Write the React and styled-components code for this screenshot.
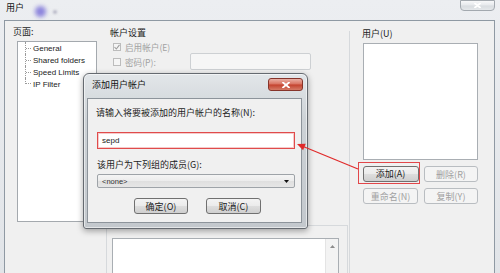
import React from 'react'
import styled, { createGlobalStyle } from 'styled-components'

const cjk = `"Noto Sans CJK SC", "Liberation Sans", sans-serif`
const latin = `"Liberation Sans", "Noto Sans CJK SC", sans-serif`

const GlobalStyle = createGlobalStyle`
  html, body {
    margin: 0;
    padding: 0;
    background: #ffffff;
  }
`

const Screen = styled.div`
  position: relative;
  width: 500px;
  height: 273px;
  overflow: hidden;
  display: flex;
  flex-direction: column;
  background: linear-gradient(180deg, #eceef1 0%, #e1e4e8 100%);
  font-family: ${cjk};
  font-size: 9px;
  color: #1c1c1c;
`

const TitleBar = styled.div`
  height: 20px;
  flex-shrink: 0;
  display: flex;
  align-items: flex-start;
  padding: 0 5px 0 6px;
`

const TitleText = styled.span`
  margin-top: 2px;
  line-height: 12px;
  color: #111;
`

const Blob = styled.span`
  width: ${p => p.size}px;
  height: ${p => p.size}px;
  margin: ${p => p.top}px 0 0 ${p => p.left}px;
  border-radius: 50%;
  background: ${p => p.color};
  filter: blur(${p => p.blur}px);
`

const Spacer = styled.div`
  flex: 1;
`

const CloseButton = styled.div`
  width: ${p => p.width}px;
  height: ${p => p.height}px;
  margin-top: ${p => p.top || 0}px;
  display: flex;
  align-items: center;
  justify-content: center;
  box-sizing: border-box;
  border: 1px solid ${p => (p.danger ? '#86342a' : '#a3a9af')};
  border-radius: ${p => (p.danger ? '3px' : '0 0 4px 4px')};
  background: ${p =>
    p.danger
      ? 'linear-gradient(180deg, #eab0a5 0%, #d8705e 48%, #c3412d 52%, #d47a66 100%)'
      : 'linear-gradient(180deg, #f7f8f9 0%, #e6e9ec 48%, #d8dce0 52%, #e4e7ea 100%)'};
`

const WindowBody = styled.div`
  flex: 1;
  margin: 0 5px 0 4px;
  border: 1px solid #8f99a3;
  border-bottom: none;
  background: #f0f0f0;
  display: grid;
  grid-template-columns: 95px 249px 1fr;
`

/* left column: page tree */
const LeftColumn = styled.div`
  padding: 5px 0 0 8px;
`

const Label = styled.div`
  line-height: 12px;
  color: ${p => (p.disabled ? '#a2a2a2' : '#1c1c1c')};
  white-space: nowrap;
`

const TreeBox = styled.div`
  margin: 3px 0 0 4px;
  width: 80px;
  height: 181px;
  box-sizing: border-box;
  border: 1px solid #a4a9ae;
  background: #ffffff;
`

const TreeItem = styled.div`
  display: flex;
  align-items: center;
  height: 12px;
  padding-left: 7px;
  font-family: ${latin};
  font-size: 8px;
  color: #222;
`

const Connector = styled.span`
  width: 6px;
  height: ${p => (p.last ? 6 : 12)}px;
  align-self: flex-start;
  box-sizing: border-box;
  border-left: 1px dotted #9a9a9a;
  border-bottom: ${p => (p.last ? '1px dotted #9a9a9a' : 'none')};
  background: ${p =>
    p.last ? 'none' : 'linear-gradient(90deg, #9a9a9a 50%, transparent 50%) 0 6px / 2px 1px repeat-x'};
`

const TreeText = styled.span`
  margin-left: 2px;
  white-space: nowrap;
`

/* middle column: account settings */
const MiddleColumn = styled.div`
  padding: 6px 0 0 10px;
  display: flex;
  flex-direction: column;
`

const SettingsGrid = styled.div`
  margin-top: 2px;
  padding-left: 3px;
  display: grid;
  grid-template-columns: 77px 121px;
  grid-template-rows: 12px 17px;
  align-items: center;
`

const CheckRow = styled.div`
  display: flex;
  align-items: center;
`

const CheckBox = styled.span`
  width: 8px;
  height: 8px;
  box-sizing: border-box;
  border: 1px solid #bcbcbc;
  background: #f5f5f5;
  display: flex;
  align-items: center;
  justify-content: center;
  margin-top: ${p => p.shift || 0}px;
`

const CheckText = styled.span`
  margin-left: 4px;
  color: #a2a2a2;
  font-size: 8.6px;
  line-height: 12px;
  white-space: nowrap;
`

const DisabledField = styled.div`
  height: 17px;
  box-sizing: border-box;
  border: 1px solid #cdd0d3;
  border-radius: 2px;
  background: #f6f6f6;
`

const GroupBox = styled.div`
  margin: 155px 1px 0 -4px;
  border: 1px solid #d6d9dc;
  border-bottom: none;
  flex: 1;
`

const Legend = styled.div`
  margin: -7px 0 0 5px;
  padding: 0 2px;
  width: max-content;
  background: #f0f0f0;
  line-height: 12px;
`

const NotesBox = styled.div`
  margin: 7px 0 0 5px;
  width: 227px;
  height: 50px;
  box-sizing: border-box;
  border: 1px solid #a9aeb3;
  background: #ffffff;
  display: flex;
  justify-content: flex-end;
`

const ScrollTrack = styled.div`
  width: 12px;
  background: #f3f3f3;
  border-left: 1px solid #e4e4e4;
  display: flex;
  justify-content: center;
  padding-top: 6px;
`

/* right column: users */
const RightColumn = styled.div`
  margin-top: 10px;
  padding: 0 0 0 13px;
  border-left: 1px solid #d6d9dc;
`

const UsersLabel = styled(Label)`
  margin: -3px 0 0 -1px;
`

const UserList = styled.div`
  margin-top: 3px;
  width: 115px;
  height: 117px;
  box-sizing: border-box;
  border: 1px solid #a9aeb3;
  background: #ffffff;
`

const ButtonGrid = styled.div`
  margin-top: 6px;
  display: grid;
  grid-template-columns: 55px 54px;
  grid-auto-rows: 16px;
  gap: 6px;
`

const Button = styled.div`
  width: ${p => (p.width ? `${p.width}px` : 'auto')};
  height: 16px;
  box-sizing: border-box;
  display: flex;
  align-items: center;
  justify-content: center;
  border-radius: 3px;
  border: 1px solid ${p => (p.disabled ? '#b9bdc1' : '#707070')};
  background: ${p =>
    p.disabled
      ? '#f4f4f4'
      : 'linear-gradient(180deg, #f3f3f3 0%, #ebebeb 48%, #dddddd 52%, #cfcfcf 100%)'};
  color: ${p => (p.disabled ? '#a0a0a0' : '#1a1a1a')};
  font-size: 9px;
  white-space: nowrap;
`

// red box drawn round the button in the screenshot
const Highlight = styled.div`
  margin: -4px -2px -2px -5px;
  padding: 2.5px 0.5px 0.5px 3.5px;
  border: 1.5px solid #e2474a;
`

/* add-user dialog, floating over the window */
const Dialog = styled.div`
  position: absolute;
  left: 83px;
  top: 73px;
  width: 225px;
  height: 156px;
  box-sizing: border-box;
  padding: 0 5px 5px 3px;
  display: flex;
  flex-direction: column;
  border: 1px solid #656a70;
  border-radius: 6px 6px 3px 3px;
  background: linear-gradient(180deg, #e2e6e9 0%, #cdd2d6 30%, #c3c8cd 100%);
  box-shadow: 0 2px 6px rgba(0, 0, 0, 0.35), inset 0 0 0 1px rgba(255, 255, 255, 0.55);
`

const DialogTitleRow = styled.div`
  height: 24px;
  flex-shrink: 0;
  display: flex;
  align-items: flex-start;
  padding-left: 5px;
  margin-right: -1px;
`

const DialogTitle = styled.span`
  margin-top: 5px;
  line-height: 12px;
  color: #111;
`

const DialogClient = styled.div`
  flex: 1;
  box-sizing: border-box;
  border: 1px solid #8d949b;
  background: #f0f0f0;
  padding: 8px 6px 0 8px;
`

const TextInput = styled.div`
  margin: 13px 0 0 1px;
  width: 198px;
  height: 17px;
  box-sizing: border-box;
  border: 1px solid #e04b4b;
  box-shadow: inset 0 0 0 1px #f6caca;
  background: #ffffff;
  display: flex;
  align-items: center;
  padding-left: 4px;
  font-family: ${latin};
  font-size: 8px;
  color: #222;
`

const GroupLabel = styled(Label)`
  margin: 10px 0 0 1px;
`

const Select = styled.div`
  margin: 3px 0 0 1px;
  width: 198px;
  height: 14px;
  box-sizing: border-box;
  border: 1px solid #9ea3a8;
  border-radius: 2px;
  background: linear-gradient(180deg, #f5f5f5 0%, #ececec 50%, #dfdfdf 51%, #e6e6e6 100%);
  display: flex;
  align-items: center;
  justify-content: space-between;
  padding: 0 5px 0 4px;
  font-family: ${latin};
  font-size: 7.5px;
  color: #333;
`

const DialogButtons = styled.div`
  margin: 10px 0 0 4px;
  display: flex;
  justify-content: center;
  gap: 18px;
`

const Annotation = styled.svg`
  position: absolute;
  left: 0;
  top: 0;
  pointer-events: none;
`

const CrossIcon = ({ color, size = 6 }) => (
  <svg width={size + 2} height={size} viewBox={`0 0 ${size + 2} ${size}`}>
    <path
      d={`M1 0.5 L${size + 1} ${size - 0.5} M${size + 1} 0.5 L1 ${size - 0.5}`}
      stroke={color}
      strokeWidth="1.8"
      strokeLinecap="round"
    />
  </svg>
)

const pages = ['General', 'Shared folders', 'Speed Limits', 'IP Filter']

const App = () => {
  return (
    <Screen>
      <GlobalStyle />
      <TitleBar>
        <TitleText>用户</TitleText>
        <Blob size={11} top={6} left={11} color="#8c84dc" blur={2} />
        <Blob size={4} top={10} left={7} color="#b5b5c4" blur={1} />
        <Spacer />
        <CloseButton width={35} height={11}>
          <CrossIcon color="#ffffff" size={5} />
        </CloseButton>
      </TitleBar>

      <WindowBody>
        <LeftColumn>
          <Label>页面:</Label>
          <TreeBox>
            {pages.map((p, i) => (
              <TreeItem key={p}>
                <Connector last={i === pages.length - 1} />
                <TreeText>{p}</TreeText>
              </TreeItem>
            ))}
          </TreeBox>
        </LeftColumn>

        <MiddleColumn>
          <Label>帐户设置</Label>
          <SettingsGrid>
            <CheckRow>
              <CheckBox>
                <svg width="6" height="6" viewBox="0 0 6 6">
                  <path d="M0.5 3 L2.3 5 L5.5 0.8" fill="none" stroke="#9c9c9c" strokeWidth="1.1" />
                </svg>
              </CheckBox>
              <CheckText>启用帐户(E)</CheckText>
            </CheckRow>
            <span />
            <CheckRow>
              <CheckBox shift={1} />
              <CheckText>密码(P):</CheckText>
            </CheckRow>
            <DisabledField />
          </SettingsGrid>
          <GroupBox>
            <Legend>描述</Legend>
            <NotesBox>
              <ScrollTrack>
                <svg width="5" height="3" viewBox="0 0 5 3">
                  <path d="M0 3 L2.5 0 L5 3 Z" fill="#8c8c8c" />
                </svg>
              </ScrollTrack>
            </NotesBox>
          </GroupBox>
        </MiddleColumn>

        <RightColumn>
          <UsersLabel>用户(U)</UsersLabel>
          <UserList />
          <ButtonGrid>
            <Highlight>
              <Button>添加(A)</Button>
            </Highlight>
            <Button disabled>删除(R)</Button>
            <Button disabled>重命名(N)</Button>
            <Button disabled>复制(Y)</Button>
          </ButtonGrid>
        </RightColumn>
      </WindowBody>

      <Dialog>
        <DialogTitleRow>
          <DialogTitle>添加用户帐户</DialogTitle>
          <Spacer />
          <CloseButton danger width={35} height={13} top={4}>
            <CrossIcon color="#ffffff" size={6} />
          </CloseButton>
        </DialogTitleRow>
        <DialogClient>
          <Label>请输入将要被添加的用户帐户的名称(N):</Label>
          <TextInput>sepd</TextInput>
          <GroupLabel>该用户为下列组的成员(G):</GroupLabel>
          <Select>
            <span>&lt;none&gt;</span>
            <svg width="5" height="3" viewBox="0 0 5 3">
              <path d="M0 0 L5 0 L2.5 3 Z" fill="#111" />
            </svg>
          </Select>
          <DialogButtons>
            <Button width={54}>确定(O)</Button>
            <Button width={55}>取消(C)</Button>
          </DialogButtons>
        </DialogClient>
      </Dialog>

      <Annotation width="500" height="273" viewBox="0 0 500 273">
        <line x1="358" y1="169" x2="302" y2="146" stroke="#e02a2a" strokeWidth="1.2" />
        <polygon points="297,144 305.7,143.8 303.1,150.3" fill="#e02a2a" />
      </Annotation>
    </Screen>
  )
}

export default App
